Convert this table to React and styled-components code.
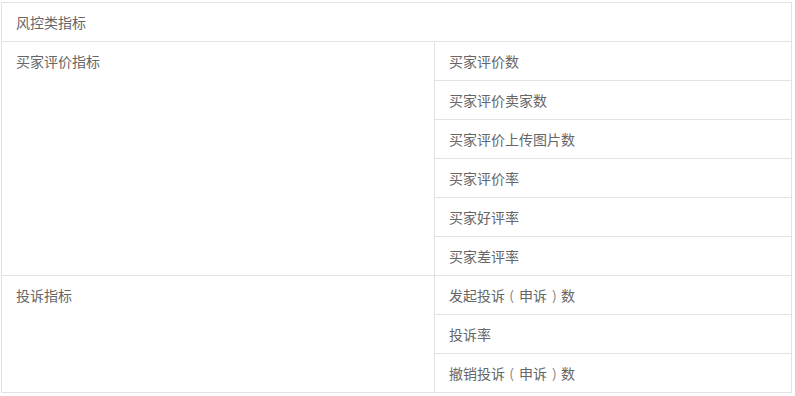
import React from 'react';
import styled, { createGlobalStyle } from 'styled-components';

const GlobalStyle = createGlobalStyle`
  body {
    margin: 0;
    padding: 2px 0 0 1px;
    background: #fff;
    font-family: "Microsoft YaHei", "Noto Sans CJK SC", sans-serif;
  }
`;

const groups = [
  {
    name: '买家评价指标',
    items: ['买家评价数', '买家评价卖家数', '买家评价上传图片数', '买家评价率', '买家好评率', '买家差评率'],
  },
  {
    name: '投诉指标',
    items: ['发起投诉（申诉）数', '投诉率', '撤销投诉（申诉）数'],
  },
];

// full-width brackets sit centred in their em box in the original font
function Label({ text }) {
  return text.split(/([（）])/).map((part, i) => {
    if (part === '（') return <Paren key={i}>(</Paren>;
    if (part === '）') return <Paren key={i}>)</Paren>;
    return part;
  });
}

function App() {
  return (
    <>
      <GlobalStyle />
      <Table>
        <colgroup>
          <col style={{ width: 433 }} />
          <col />
        </colgroup>
        <tbody>
          <tr>
            <Cell colSpan={2}>风控类指标</Cell>
          </tr>
          {groups.map((g) =>
            g.items.map((item, i) => (
              <tr key={g.name + item}>
                {i === 0 && <Cell rowSpan={g.items.length}>{g.name}</Cell>}
                <Cell>
                  <Label text={item} />
                </Cell>
              </tr>
            ))
          )}
        </tbody>
      </Table>
    </>
  );
}

export default App;

const Table = styled.table`
  width: 791px;
  border-collapse: collapse;
  table-layout: fixed;
  color: #666;
  font-size: 14px;
`;

const Cell = styled.td`
  height: 38px;
  padding: 0 14px;
  line-height: 38px;
  vertical-align: top;
  border: 1px solid #e2e2e2;
  white-space: nowrap;
`;

const Paren = styled.span`
  display: inline-block;
  width: 14px;
  line-height: 1;
  text-align: center;
  font-family: "Noto Sans", "Liberation Sans", sans-serif;
  font-weight: 300;
`;
